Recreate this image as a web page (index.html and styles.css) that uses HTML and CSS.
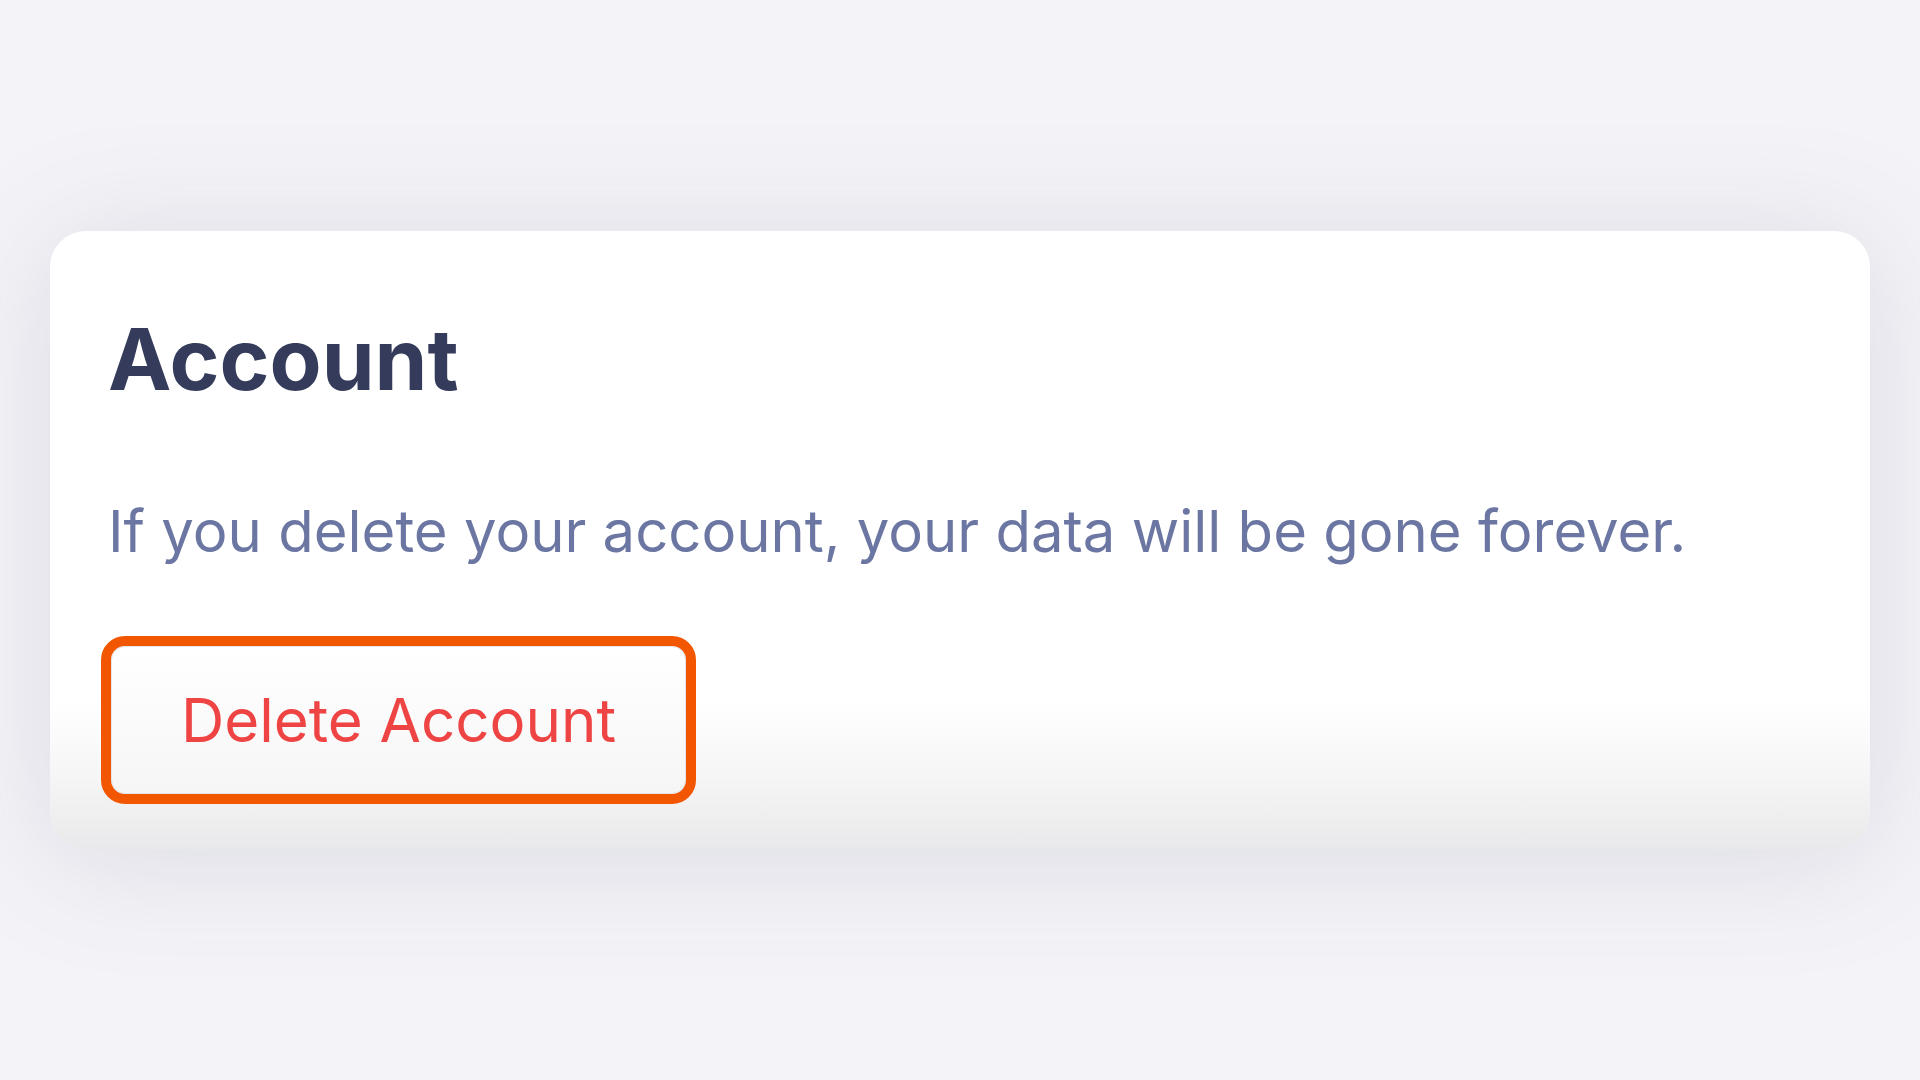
FILE: index.html
```html
<!DOCTYPE html>
<html lang="en">
<head>
<meta charset="utf-8">
<title>Account</title>
<link rel="stylesheet" href="styles.css">
</head>
<body>
<main class="page">
  <section class="card">
    <h2 class="card-title">Account</h2>
    <p class="card-text">If you delete your account, your data will be gone forever.</p>
    <div class="highlight">
      <button class="btn-delete" type="button">Delete Account</button>
    </div>
  </section>
</main>
</body>
</html>
```
FILE: styles.css
```css
* { box-sizing: border-box; }
html, body { margin: 0; padding: 0; }
body {
  width: 1920px;
  height: 1080px;
  overflow: hidden;
  background: #f4f4f8;
  font-family: "Inter", "Lato", sans-serif;
}
.page {
  padding: 231px 50px 0;
  display: flex;
  flex-direction: column;
}
.card {
  height: 618px;
  border-radius: 36px;
  background: linear-gradient(to bottom, #ffffff 0%, #ffffff 76%, #f6f6f6 88%, #e9e9eb 100%);
  box-shadow: 0 10px 120px 14px rgba(40, 40, 80, 0.10);
  padding: 79px 58px 0;
  display: flex;
  flex-direction: column;
  align-items: flex-start;
}
.card-title {
  margin: 0;
  font-size: 85px;
  line-height: 100px;
  font-weight: 700;
  color: #353c5b;
}
.card-text {
  margin: 86px 0 0;
  font-size: 58px;
  line-height: 70px;
  color: #6b77a2;
}
.highlight {
  margin: 80px 0 0 3px;
  outline: 10px solid #f25600;
  border-radius: 14px;
}
.btn-delete {
  display: flex;
  align-items: center;
  justify-content: center;
  width: 575px;
  height: 148px;
  border: 1px solid #e3e5ec;
  border-radius: 14px;
  background: linear-gradient(to bottom, #ffffff, #f6f6f7);
  font-family: inherit;
  font-size: 60px;
  color: #ef4444;
  padding: 0;
  cursor: pointer;
}
```
